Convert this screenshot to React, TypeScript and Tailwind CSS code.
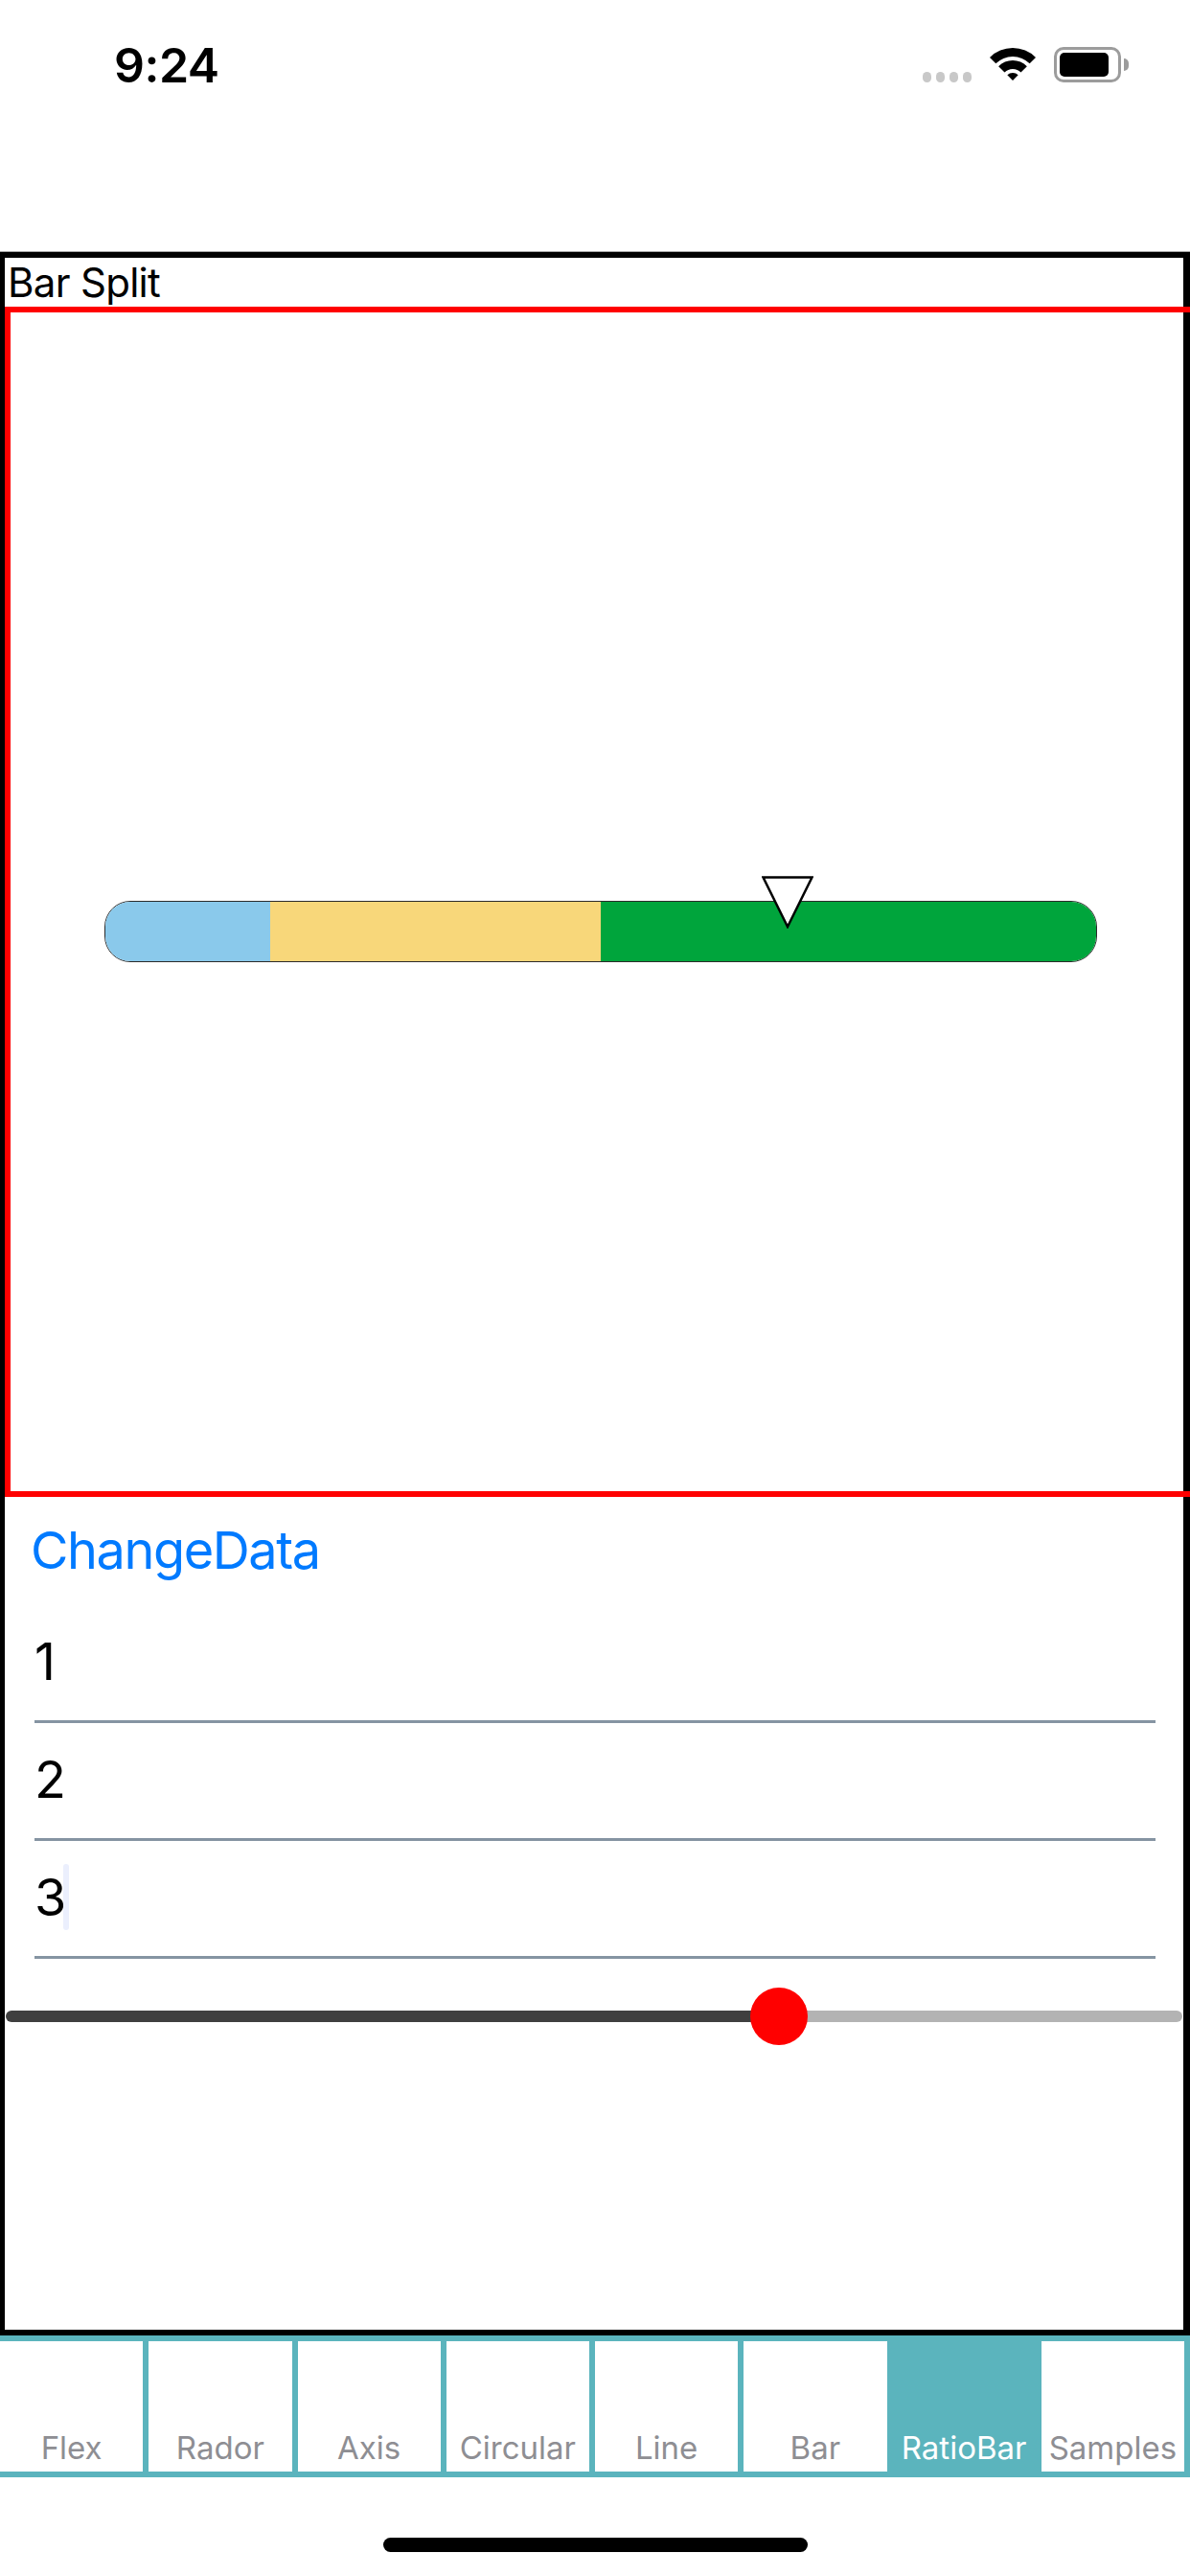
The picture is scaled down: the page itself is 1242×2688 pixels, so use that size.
import React from "react";

const tabs = ["Flex", "Rador", "Axis", "Circular", "Line", "Bar", "RatioBar", "Samples"];

function Wifi() {
  return (
    <svg width="48" height="36" viewBox="0 0 48 36">
      <path d="M 0 10.96 A 34 34 0 0 1 48 10.96 L 41.68 17.32 A 25 25 0 0 0 6.32 17.32 Z" fill="#000" />
      <path d="M 9.15 20.15 A 21 21 0 0 1 38.85 20.15 L 32.49 26.51 A 12 12 0 0 0 15.51 26.51 Z" fill="#000" />
      <path d="M 24 35 L 18.34 29.34 A 8 8 0 0 1 29.66 29.34 Z" fill="#000" />
    </svg>
  );
}

function StatusBar() {
  return (
    <div className="flex justify-between items-start h-[263px] border-b border-[#a8a8a8]">
      <div className="ml-[119px] mt-[38px] text-[50px] leading-[60px] font-semibold tracking-[-0.5px] text-black">
        9:24
      </div>
      <div className="flex items-start mr-[64px]">
        <div className="flex gap-[5px] mt-[75px]">
          <div className="w-[9px] h-[11px] rounded-full bg-[#c8c8c8]" />
          <div className="w-[9px] h-[11px] rounded-full bg-[#c8c8c8]" />
          <div className="w-[9px] h-[11px] rounded-full bg-[#c8c8c8]" />
          <div className="w-[9px] h-[11px] rounded-full bg-[#c8c8c8]" />
        </div>
        <div className="ml-[19px] mt-[49px]">
          <Wifi />
        </div>
        <div className="ml-[19px] mt-[49px] flex items-center">
          <div className="w-[70px] h-[37px] rounded-[10px] border-[3px] border-[#9c9c9c] p-[3px] flex">
            <div className="w-[51px] h-full rounded-[5px] bg-black" />
          </div>
          <div className="ml-[3px] w-[5px] h-[13px] rounded-r-full bg-[#9c9c9c]" />
        </div>
      </div>
    </div>
  );
}

function RatioBar() {
  return (
    <div className="relative w-[1036px] h-[64px]">
      <div className="flex w-full h-full rounded-[27px] border-[1.5px] border-[#2b2b2b] overflow-hidden">
        <div className="w-[172px] h-full bg-[#8ac9eb]" />
        <div className="w-[345px] h-full bg-[#f8d77a]" />
        <div className="flex-1 h-full bg-[#00a53c]" />
      </div>
      <svg className="absolute left-[686px] top-[-26px]" width="54" height="55" viewBox="0 0 54 55">
        <polygon points="1.5,1.5 52.5,1.5 27,53" fill="#fff" stroke="#000" strokeWidth="2.5" strokeLinejoin="miter" />
      </svg>
    </div>
  );
}

function Row({ label, caret }: { label: string; caret?: boolean }) {
  return (
    <div className="relative pt-[26px] pb-[28px] border-b-[3px] border-[#8594a2] text-[54px] leading-[66px] text-black">
      <span>{label}</span>
      {caret && <div className="absolute left-[30px] top-[24px] w-[6px] h-[69px] rounded-full bg-[#ebeffd]" />}
    </div>
  );
}

export default function App() {
  return (
    <div className="w-[1242px] h-[2688px] overflow-hidden bg-white flex flex-col font-['Inter','Noto_Sans',sans-serif]">
      <StatusBar />
      <div className="h-[2174px] shrink-0 border-t-[6px] border-b-[6px] border-l-[5px] border-r-[7px] border-black flex flex-col">
        <div className="h-[51px] pl-[3px] text-[42px] leading-[51px] tracking-[-0.7px] text-black">Bar Split</div>
        <div className="w-[1242px] h-[1242px] shrink-0 border-t-[6px] border-l-[6px] border-b-[6px] border-[#ff0000] pt-[614px] pl-[98px]">
          <RatioBar />
        </div>
        <div className="mt-[23px] pl-[27px] text-[54px] leading-[66px] tracking-[-1.4px] text-[#007aff]">ChangeData</div>
        <div className="mt-[24px] ml-[31px] mr-[29px] flex flex-col">
          <Row label="1" />
          <Row label="2" />
          <Row label="3" caret />
        </div>
        <div className="relative mt-[30px] mx-[1px] h-[60px] flex items-center">
          <div className="flex w-full h-[12px] rounded-full overflow-hidden">
            <div className="w-[807px] h-full bg-[#3f3f3f]" />
            <div className="flex-1 h-full bg-[#b3b3b3]" />
          </div>
          <div className="absolute left-[777px] top-0 w-[60px] h-[60px] rounded-full bg-[#ff0000]" />
        </div>
      </div>
      <div className="h-[148px] shrink-0 border-t-[6px] border-b-[6px] border-[#5bb4bd] flex">
        {tabs.map((t) => (
          <div
            key={t}
            className={
              t === "RatioBar"
                ? "flex-1 border-r-[6px] border-[#5bb4bd] bg-[#5bb4bd] text-white flex items-end justify-center pb-[5px] text-[33px] leading-[40px] whitespace-nowrap"
                : "flex-1 border-r-[6px] border-[#5bb4bd] bg-white text-[#8e8e93] flex items-end justify-center pb-[5px] text-[33px] leading-[40px] whitespace-nowrap"
            }
          >
            {t}
          </div>
        ))}
      </div>
      <div className="mt-[63px] mx-auto w-[443px] h-[15px] rounded-full bg-black" />
    </div>
  );
}
